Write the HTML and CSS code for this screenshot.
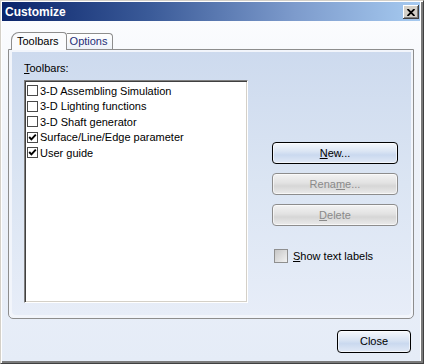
FILE: index.html
```html
<!DOCTYPE html>
<html lang="en">
<head>
    <meta charset="UTF-8">
    <title>Customize</title>
    <link rel="stylesheet" href="styles.css">
</head>
<body>
    <div class="window">
        <div class="titlebar">
            <span class="title">Customize</span>
            <button class="title-close" aria-label="Close">
                <svg width="8" height="7" viewBox="0 0 8 7">
                    <path d="M0.5 0 L7.5 7 M7.5 0 L0.5 7" stroke="#000" stroke-width="1.8" fill="none"/>
                </svg>
            </button>
        </div>

        <div class="content">
            <div class="tabs">
                <div class="tab active">Toolbars</div>
                <div class="tab">Options</div>
            </div>

            <div class="panel">
                <div class="panel-inner">
                    <div class="label"><u>T</u>oolbars:</div>
                    <div class="panel-row">
                        <div class="listbox">
                            <div class="list-item"><span class="check"></span>3-D Assembling Simulation</div>
                            <div class="list-item"><span class="check"></span>3-D Lighting functions</div>
                            <div class="list-item"><span class="check"></span>3-D Shaft generator</div>
                            <div class="list-item"><span class="check checked"><svg width="9" height="9" viewBox="0 0 9 9"><path d="M1.2 4 L3.4 6.3 L7.8 1.6" stroke="#000" stroke-width="1.9" fill="none"/></svg></span>Surface/Line/Edge parameter</div>
                            <div class="list-item"><span class="check checked"><svg width="9" height="9" viewBox="0 0 9 9"><path d="M1.2 4 L3.4 6.3 L7.8 1.6" stroke="#000" stroke-width="1.9" fill="none"/></svg></span>User guide</div>
                        </div>
                        <div class="actions">
                            <button class="btn"><u>N</u>ew...</button>
                            <button class="btn disabled">Rena<u>m</u>e...</button>
                            <button class="btn disabled"><u>D</u>elete</button>
                            <label class="option"><span class="box"></span><span><u>S</u>how text labels</span></label>
                        </div>
                    </div>
                </div>
            </div>

            <div class="footer">
                <button class="btn close-btn">Close</button>
            </div>
        </div>
    </div>
</body>
</html>
```

FILE: styles.css
```css
body {
    margin: 0;
    font-family: "Liberation Sans", Arial, sans-serif;
    font-size: 11px;
    color: #000;
    background: #fff;
}
.window {
    width: 424px;
    height: 364px;
    box-sizing: border-box;
    border-top: 1px solid #d4d0c8;
    border-left: 1px solid #d4d0c8;
    border-right: 1px solid #404040;
    border-bottom: 1px solid #404040;
    box-shadow: inset 1px 1px #fff, inset -2px -2px #7a7a7a;
    padding: 1px 3px 2px 1px;
    display: flex;
    flex-direction: column;
}
.titlebar {
    height: 19px;
    flex: none;
    display: flex;
    align-items: center;
    justify-content: space-between;
    padding: 0 1px 0 3px;
    background: linear-gradient(to right, #0a246a, #3a5a98 35%, #7d9bcc 70%, #a6caf0);
}
.title {
    color: #fff;
    font-weight: bold;
    font-size: 12px;
}
.title-close {
    width: 16px;
    height: 14px;
    padding: 0;
    margin-top: 1px;
    background: #d4d0c8;
    border: none;
    box-shadow: inset -1px -1px #404040, inset 1px 1px #fff, inset -2px -2px #808080;
    display: flex;
    align-items: center;
    justify-content: center;
}
.content {
    flex: 1;
    background: linear-gradient(#fbfcfe, #eef2f9 40%, #e5ecf7);
    padding: 11px 0 0 6px;
}
.tabs {
    display: flex;
    align-items: flex-end;
    margin-left: 3px;
    height: 17px;
}
.tab {
    height: 15px;
    line-height: 15px;
    padding: 0 4px 0 3px;
    border: 1px solid #8d8d8d;
    border-bottom: none;
    border-left: none;
    border-radius: 0 4px 0 0;
    background: linear-gradient(#ffffff, #eef2f8);
    color: #1e2f78;
}
.tab.active {
    height: 17px;
    line-height: 17px;
    padding: 0 7px 0 5px;
    border-left: 1px solid #8d8d8d;
    border-radius: 8px 4px 0 0;
    background: #fafbfd;
    color: #000;
    position: relative;
    z-index: 1;
    margin-bottom: -1px;
}
.panel {
    width: 406px;
    height: 270px;
    box-sizing: border-box;
    border: 1px solid #8d8d8d;
    border-radius: 0 0 5px 5px;
    background: #f2f5fb;
    padding: 2px 2px 3px 3px;
}
.panel-inner {
    height: 100%;
    box-sizing: border-box;
    border-radius: 0 0 4px 4px;
    background: linear-gradient(#cddaee, #dbe5f3 50%, #e7edf8);
    padding: 9px 0 0 12px;
}
.label {
    line-height: 14px;
    margin-bottom: 5px;
}
.panel-row {
    display: flex;
}
.listbox {
    width: 224px;
    height: 223px;
    box-sizing: border-box;
    background: #fff;
    border-top: 1px solid #808080;
    border-left: 1px solid #808080;
    border-right: 1px solid #fff;
    border-bottom: 1px solid #fff;
    box-shadow: inset 1px 1px #404040, inset -1px -1px #d4d0c8;
    padding: 2px 0 0 2px;
}
.list-item {
    height: 15.5px;
    display: flex;
    align-items: center;
    gap: 2px;
}
.check {
    width: 11px;
    height: 11px;
    box-sizing: border-box;
    border: 1px solid #4a4a4a;
    background: #fff;
    display: flex;
    align-items: center;
    justify-content: center;
    flex: none;
}
.actions {
    margin-left: 24px;
    padding-top: 62px;
    display: flex;
    flex-direction: column;
}
.btn {
    font-family: inherit;
    font-size: 11px;
    height: 22px;
    padding: 0 0 1px;
    border: 1px solid #000;
    border-radius: 4px;
    background: linear-gradient(#f5f8fc, #dce6f4 40%, #cad9ef 60%, #e1e9f6);
    box-shadow: inset 0 0 0 1px rgba(255, 255, 255, 0.6);
    color: #000;
}
.actions .btn {
    width: 126px;
    margin-bottom: 9px;
}
.btn.disabled {
    border-color: #8d8d8d;
    background: linear-gradient(#f3f3f3, #e2e2e2 45%, #d6d6d6 60%, #ebebeb);
    color: #8a8a8a;
}
.option {
    display: flex;
    align-items: center;
    gap: 5px;
    margin-top: 14px;
    margin-left: 2px;
}
.box {
    width: 12px;
    height: 12px;
    border: 1px solid #8f8f8f;
    background: linear-gradient(135deg, #c6c6c6, #f2f2f2);
}
.footer {
    display: flex;
    justify-content: flex-end;
    padding: 11px 9px 0 0;
}
.close-btn {
    width: 74px;
    height: 23px;
}
```
